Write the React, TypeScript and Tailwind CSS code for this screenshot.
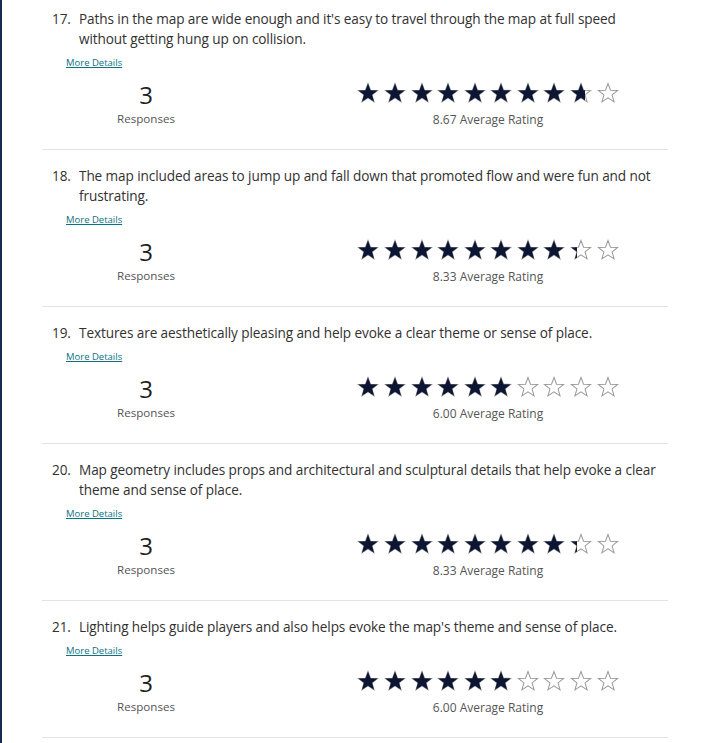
import React from "react";

type Q = { n: number; text: string; rating: number };

const questions: Q[] = [
  {
    n: 17,
    text: "Paths in the map are wide enough and it's easy to travel through the map at full speed without getting hung up on collision.",
    rating: 8.67,
  },
  {
    n: 18,
    text: "The map included areas to jump up and fall down that promoted flow and were fun and not frustrating.",
    rating: 8.33,
  },
  {
    n: 19,
    text: "Textures are aesthetically pleasing and help evoke a clear theme or sense of place.",
    rating: 6.0,
  },
  {
    n: 20,
    text: "Map geometry includes props and architectural and sculptural details that help evoke a clear theme and sense of place.",
    rating: 8.33,
  },
  {
    n: 21,
    text: "Lighting helps guide players and also helps evoke the map's theme and sense of place.",
    rating: 6.0,
  },
];

const STAR = "12,1.6 14.75,8.9 22.6,9.15 16.45,14 18.6,21.6 12,17.25 5.4,21.6 7.55,14 1.4,9.15 9.25,8.9";

function Star({ fill }: { fill: number }) {
  return (
    <div className="relative w-[22px] h-[22px] shrink-0">
      <svg viewBox="0 0 24 24" className="absolute inset-0 w-[22px] h-[22px]">
        <polygon points={STAR} fill="white" stroke="#9a9a9a" strokeWidth="1.1" strokeLinejoin="miter" />
      </svg>
      {fill > 0 && (
        <div className="absolute left-0 top-0 h-[22px] overflow-hidden" style={{ width: `${fill * 22}px` }}>
          <svg viewBox="0 0 24 24" className="w-[22px] h-[22px]">
            <polygon points={STAR} fill="#0c1633" />
          </svg>
        </div>
      )}
    </div>
  );
}

function Stars({ rating }: { rating: number }) {
  const items = [];
  for (let i = 0; i < 10; i++) {
    const f = Math.max(0, Math.min(1, rating - i));
    items.push(<Star key={i} fill={f} />);
  }
  return <div className="flex gap-[4.6px]">{items}</div>;
}

function Item({ q }: { q: Q }) {
  return (
    <div className="pt-[16px] pb-[20px] border-b border-[#e3e3e3]">
      <div className="flex text-[13.6px] leading-[20px] tracking-[-0.1px] text-[#323130]">
        <div className="w-[37px] shrink-0 pl-[10px]">{q.n}.</div>
        <div className="w-[582px]">{q.text}</div>
      </div>
      <div className="mt-[7px] pl-[24px] text-[9.5px] leading-[14px]">
        <a href="#" className="text-[#0b7283] underline">More Details</a>
      </div>
      <div className="mt-[10px] flex">
        <div className="w-[208px] flex flex-col items-center">
          <div className="text-[24px] leading-[30px] text-[#201f1e]">3</div>
          <div className="text-[11.6px] leading-[18px] text-[#555]">Responses</div>
        </div>
        <div className="ml-[58px] w-[360px] flex flex-col items-center pt-[2px]">
          <Stars rating={q.rating} />
          <div className="mt-[7px] text-[12px] leading-[18px] text-[#555]">
            {q.rating.toFixed(2)} Average Rating
          </div>
        </div>
      </div>
    </div>
  );
}

export default function App() {
  return (
    <div
      className="min-h-screen bg-white border-l-2 border-[#1a2a4f] overflow-hidden"
      style={{ fontFamily: '"Open Sans", "Noto Sans", sans-serif' }}
    >
      <div className="ml-[40px] w-[626px] -mt-[7px]">
        {questions.map((q) => (
          <Item key={q.n} q={q} />
        ))}
      </div>
    </div>
  );
}
